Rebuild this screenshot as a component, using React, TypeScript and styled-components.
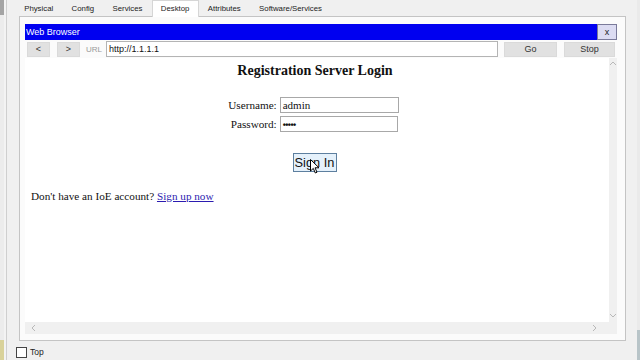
import React from 'react';
import styled, { createGlobalStyle } from 'styled-components';

const Global = createGlobalStyle`
  html, body { margin: 0; padding: 0; background: #f0f0f0; }
  body { width: 640px; height: 360px; overflow: hidden; font-family: "Liberation Sans", Arial, sans-serif; }
  * { box-sizing: border-box; }
`;

const Screen = styled.div`
  display: flex;
  width: 640px;
  height: 360px;
`;

const LeftEdge = styled.div`
  width: 7px;
  border-right: 1px solid #cfcfcf;
  background: linear-gradient(#a4a4a4 0 15px, #ececec 15px 340px, #d9d29a 340px);
  background-size: 4px 100%;
  background-repeat: no-repeat;
  background-color: #f3f3f3;
`;

const Main = styled.div`
  flex: 1;
  display: flex;
  flex-direction: column;
  padding-left: 8px;
`;

const TabBar = styled.div`
  display: flex;
  height: 16px;
  position: relative;
  z-index: 1;
`;

const Tab = styled.div<{ $active?: boolean }>`
  padding: 0 8.2px;
  height: ${p => (p.$active ? '17px' : '16px')};
  font-size: 7.8px;
  line-height: 16px;
  color: #222;
  background: ${p => (p.$active ? '#ffffff' : '#f0f0f0')};
  border: 1px solid ${p => (p.$active ? '#d6d6d6' : 'transparent')};
  border-bottom: none;
  white-space: nowrap;
`;

const Panel = styled.div`
  margin-left: 4px;
  height: 326px;
  border: 1px solid #c4c4c4;
  background: #fbfbfb;
  padding: 7px 8px 6px 5px;
  display: flex;
`;

const Browser = styled.div`
  flex: 1;
  display: flex;
  flex-direction: column;
`;

const TitleBar = styled.div`
  height: 16px;
  background: #0000f0;
  display: flex;
  align-items: center;
  justify-content: space-between;
`;

const TitleText = styled.span`
  color: #fff;
  font-size: 9px;
  padding-left: 1px;
`;

const CloseBtn = styled.div`
  width: 20px;
  height: 16px;
  background: #dcdcf2;
  border: 1px solid #7a7a9a;
  font-size: 9px;
  line-height: 14px;
  text-align: center;
  color: #222;
`;

const Toolbar = styled.div`
  display: flex;
  align-items: center;
  height: 18px;
  padding: 1px 0 1px 2px;
  gap: 7px;
`;

const NavBtn = styled.div<{ $w: number }>`
  width: ${p => p.$w}px;
  height: 15px;
  background: #e1e1e1;
  border: 1px solid #dadada;
  font-size: 9px;
  line-height: 13px;
  text-align: center;
  color: #333;
`;

const UrlLabel = styled.span`
  font-size: 8px;
  color: #9a9a9a;
  margin-left: -1px;
`;

const UrlInput = styled.div`
  width: 392px;
  height: 16px;
  margin-left: -3px;
  margin-right: -1px;
  border: 1px solid #b4b4b4;
  background: #fff;
  font-size: 9px;
  line-height: 14px;
  padding-left: 2px;
  color: #111;
`;

const ViewArea = styled.div`
  flex: 1;
  display: grid;
  grid-template-columns: 1fr 8px;
  grid-template-rows: 1fr 12px;
  background: #f2f2f2;
`;

const Page = styled.div`
  background: #ffffff;
  display: flex;
  flex-direction: column;
  font-family: "Liberation Serif", "Times New Roman", serif;
  color: #111;
  padding: 5px 6px 0 6px;
`;

const Heading = styled.div`
  text-align: center;
  font-weight: bold;
  font-size: 14px;
  line-height: 16px;
  margin-left: -4px;
`;

const Form = styled.div`
  margin-top: 18px;
  display: grid;
  grid-template-columns: auto auto;
  justify-content: center;
  column-gap: 3px;
  row-gap: 3px;
  margin-left: -7px;
`;

const Label = styled.label`
  font-size: 11.2px;
  line-height: 16px;
  text-align: right;
`;

const Field = styled.div<{ $w: number }>`
  width: ${p => p.$w}px;
  height: 16px;
  border: 1px solid #a8a8a8;
  font-size: 11px;
  line-height: 14px;
  padding-left: 2px;
  background: #fff;
`;

const Dots = styled.span`
  font-family: "Liberation Sans", Arial, sans-serif;
  font-size: 9px;
  letter-spacing: -0.6px;
  font-weight: bold;
`;

const ButtonRow = styled.div`
  display: flex;
  justify-content: center;
  margin-top: 21px;
  margin-left: -5px;
`;

const SignIn = styled.div`
  position: relative;
  width: 44px;
  height: 19px;
  border: 1px solid #5d7f9f;
  background: #e5f1fb;
  font-family: "Liberation Sans", Arial, sans-serif;
  font-size: 12.8px;
  line-height: 17px;
  text-align: center;
  color: #111;
`;

const Cursor = styled.svg`
  position: absolute;
  left: 16px;
  top: 5px;
`;

const SignupLine = styled.div`
  margin-top: 17px;
  font-size: 11.2px;
  line-height: 14px;
`;

const Link = styled.a`
  color: #2b1bb0;
  text-decoration: underline;
`;

const VScroll = styled.div`
  background: #f0f0f0;
  display: flex;
  flex-direction: column;
  justify-content: space-between;
  align-items: center;
  padding: 2px 0 2px 0;
`;

const HScroll = styled.div`
  background: #f0f0f0;
  display: flex;
  justify-content: space-between;
  align-items: center;
  padding: 0 10px 0 5px;
`;

const Corner = styled.div`
  background: #f0f0f0;
`;

const BottomRow = styled.div`
  display: flex;
  align-items: center;
  gap: 3px;
  height: 19px;
  padding-left: 1px;
  padding-top: 3px;
  font-size: 8.5px;
  color: #222;
`;

const CheckBox = styled.div`
  width: 11px;
  height: 11px;
  border: 1px solid #444;
  background: #fff;
`;

const RightEdge = styled.div`
  width: 14px;
  display: flex;
  justify-content: flex-end;
`;

const RightStrip = styled.div`
  width: 3px;
  background: linear-gradient(#eaeaea 0 330px, #b8c4c8 330px);
`;

const Chevron = ({ dir }: { dir: 'up' | 'down' | 'left' | 'right' }) => {
  const paths: Record<string, string> = {
    up: 'M1 5 L4 2 L7 5',
    down: 'M1 2 L4 5 L7 2',
    left: 'M5 1 L2 4 L5 7',
    right: 'M2 1 L5 4 L2 7',
  };
  return (
    <svg width="8" height="8" viewBox="0 0 8 8">
      <path d={paths[dir]} fill="none" stroke="#b8b8b8" strokeWidth="1" />
    </svg>
  );
};

export default function App() {
  const tabs = ['Physical', 'Config', 'Services', 'Desktop', 'Attributes', 'Software/Services'];
  return (
    <>
      <Global />
      <Screen>
        <LeftEdge />
        <Main>
          <TabBar>
            {tabs.map(t => (
              <Tab key={t} $active={t === 'Desktop'}>{t}</Tab>
            ))}
          </TabBar>
          <Panel>
            <Browser>
              <TitleBar>
                <TitleText>Web Browser</TitleText>
                <CloseBtn>x</CloseBtn>
              </TitleBar>
              <Toolbar>
                <NavBtn $w={23}>&lt;</NavBtn>
                <NavBtn $w={23}>&gt;</NavBtn>
                <UrlLabel>URL</UrlLabel>
                <UrlInput>http://1.1.1.1</UrlInput>
                <NavBtn $w={53}>Go</NavBtn>
                <NavBtn $w={51}>Stop</NavBtn>
              </Toolbar>
              <ViewArea>
                <Page>
                  <Heading>Registration Server Login</Heading>
                  <Form>
                    <Label>Username:</Label>
                    <Field $w={119}>admin</Field>
                    <Label>Password:</Label>
                    <Field $w={118}><Dots>•••••</Dots></Field>
                  </Form>
                  <ButtonRow>
                    <SignIn>
                      Sign In
                      <Cursor width="11" height="16" viewBox="0 0 11 16">
                        <path d="M0.5 0.5 L0.5 12 L3.3 9.4 L5.3 14 L7 13.2 L5 8.8 L9 8.8 Z" fill="#fff" stroke="#000" strokeWidth="1" strokeLinejoin="round" />
                      </Cursor>
                    </SignIn>
                  </ButtonRow>
                  <SignupLine>
                    Don't have an IoE account? <Link>Sign up now</Link>
                  </SignupLine>
                </Page>
                <VScroll>
                  <Chevron dir="up" />
                  <Chevron dir="down" />
                </VScroll>
                <HScroll>
                  <Chevron dir="left" />
                  <Chevron dir="right" />
                </HScroll>
                <Corner />
              </ViewArea>
            </Browser>
          </Panel>
          <BottomRow>
            <CheckBox />
            <span>Top</span>
          </BottomRow>
        </Main>
        <RightEdge>
          <RightStrip />
        </RightEdge>
      </Screen>
    </>
  );
}
